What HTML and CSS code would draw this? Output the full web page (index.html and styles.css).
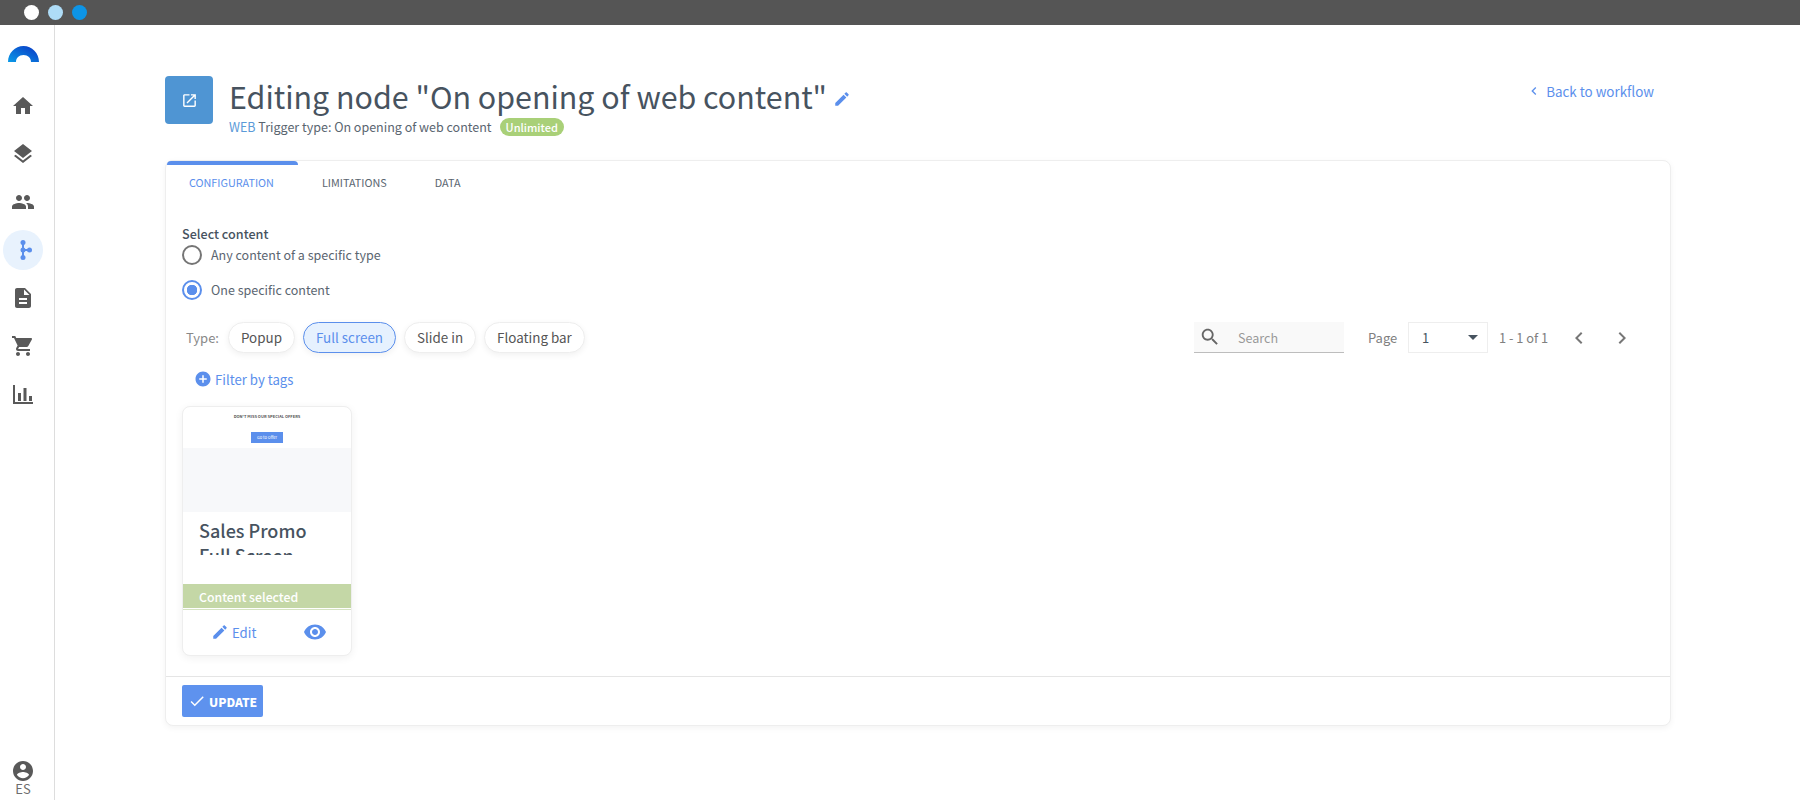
FILE: index.html
```html
<!DOCTYPE html>
<html lang="en">
<head>
<meta charset="utf-8">
<title>Editing node</title>
<link rel="stylesheet" href="styles.css">
</head>
<body>
<div class="topbar">
  <span class="dot dot-white"></span><span class="dot dot-light"></span><span class="dot dot-blue"></span>
</div>
<div class="app">
  <nav class="sidebar">
    <svg class="logo" viewBox="0 0 31 16" width="31" height="16"><defs><linearGradient id="lg" x1="0" y1="1" x2="1" y2="0"><stop offset="0" stop-color="#0a9be8"/><stop offset="1" stop-color="#0a35c4"/></linearGradient></defs><path fill="url(#lg)" d="M0 16C0 7 7 0 15.500 0S31 7 31 16H23C23 12 20 9 15.500 9S8 12 8 16Z"/></svg>
    <a class="nav-item"><svg viewBox="0 0 24 24"><path d="M10 20v-6h4v6h5v-8h3L12 3 2 12h3v8z"/></svg></a>
    <a class="nav-item"><svg viewBox="0 0 24 24"><path d="M11.990 18.540l-7.370-5.730L3 14.070l9 7 9-7-1.630-1.270-7.380 5.740zM12 16l7.360-5.730L21 9l-9-7-9 7 1.630 1.270L12 16z"/></svg></a>
    <a class="nav-item"><svg viewBox="0 0 24 24"><path d="M16 11c1.660 0 2.990-1.340 2.990-3S17.660 5 16 5c-1.660 0-3 1.340-3 3s1.340 3 3 3zm-8 0c1.660 0 2.990-1.340 2.990-3S9.660 5 8 5C6.340 5 5 6.340 5 8s1.340 3 3 3zm0 2c-2.330 0-7 1.170-7 3.500V19h14v-2.500c0-2.330-4.670-3.500-7-3.500zm8 0c-.29 0-.62.02-.97.05 1.160.84 1.970 1.970 1.970 3.450V19h6v-2.500c0-2.330-4.670-3.500-7-3.500z"/></svg></a>
    <a class="nav-item nav-active"><svg viewBox="0 0 24 24"><path d="M11 3h2v18h-2zM12 11h7v2h-7z"/><circle cx="12" cy="4.500" r="2.500"/><circle cx="12" cy="19.500" r="2.500"/><circle cx="12" cy="12" r="2.500"/><circle cx="18.500" cy="12" r="2.500"/></svg></a>
    <a class="nav-item"><svg viewBox="0 0 24 24"><path d="M14 2H6c-1.100 0-1.990.9-1.990 2L4 20c0 1.100.89 2 1.990 2H18c1.100 0 2-.9 2-2V8l-6-6zm2 16H8v-2h8v2zm0-4H8v-2h8v2zm-3-5V3.500L18.500 9H13z"/></svg></a>
    <a class="nav-item"><svg viewBox="0 0 24 24"><path d="M7 18c-1.100 0-1.990.9-1.990 2S5.900 22 7 22s2-.9 2-2-.9-2-2-2zM1 2v2h2l3.600 7.590-1.350 2.450c-.16.28-.25.61-.25.96 0 1.100.9 2 2 2h12v-2H7.420c-.14 0-.25-.11-.25-.25l.03-.12.9-1.630h7.450c.75 0 1.410-.41 1.750-1.030l3.580-6.490c.08-.14.12-.31.12-.48 0-.55-.45-1-1-1H5.210l-.94-2H1zm16 16c-1.100 0-1.990.9-1.990 2s.89 2 1.990 2 2-.9 2-2-.9-2-2-2z"/></svg></a>
    <a class="nav-item"><svg viewBox="0 0 24 24"><path d="M2 3h2v17h18v2H2zM7 11h3v8H7zM12.500 6h3v13h-3zM18 14h3v5h-3z"/></svg></a>
    <div class="user">
      <svg viewBox="0 0 24 24"><path d="M12 2C6.480 2 2 6.480 2 12s4.480 10 10 10 10-4.480 10-10S17.520 2 12 2zm0 3c1.660 0 3 1.340 3 3s-1.340 3-3 3-3-1.340-3-3 1.340-3 3-3zm0 14.200c-2.500 0-4.710-1.280-6-3.220.03-1.990 4-3.080 6-3.080 1.990 0 5.970 1.090 6 3.080-1.290 1.940-3.500 3.220-6 3.220z"/></svg>
      <span class="lang">ES</span>
    </div>
  </nav>
  <main class="main">
    <header class="header">
      <div class="tile"><svg viewBox="0 0 24 24"><path d="M19 19H5V5h7V3H5c-1.110 0-2 .9-2 2v14c0 1.100.89 2 2 2h14c1.100 0 2-.9 2-2v-7h-2v7zM14 3v2h3.590l-9.830 9.830 1.410 1.410L19 6.410V10h2V3h-7z"/></svg></div>
      <div class="heading">
        <h1 class="title">Editing node "On opening of web content"<svg class="title-edit" viewBox="0 0 24 24"><path d="M3 17.250V21h3.750L17.810 9.940l-3.750-3.750L3 17.250zM20.710 7.040c.39-.39.39-1.020 0-1.410l-2.340-2.340c-.39-.39-1.020-.39-1.410 0l-1.830 1.830 3.750 3.750 1.830-1.830z"/></svg></h1>
        <div class="subtitle"><span class="web">WEB</span> Trigger type: On opening of web content<span class="badge">Unlimited</span></div>
      </div>
      <a class="back"><svg viewBox="0 0 24 24"><path d="M15.410 7.410L14 6l-6 6 6 6 1.410-1.410L10.830 12z"/></svg>Back to workflow</a>
    </header>
    <section class="card">
      <div class="tabs">
        <span class="tab tab-active">CONFIGURATION</span>
        <span class="tab">LIMITATIONS</span>
        <span class="tab">DATA</span>
      </div>
      <div class="card-body">
        <div class="field-label">Select content</div>
        <label class="radio-row"><span class="radio"></span>Any content of a specific type</label>
        <label class="radio-row radio-row-second"><span class="radio radio-on"></span>One specific content</label>
        <div class="filters">
          <span class="type-label">Type:</span>
          <span class="chip">Popup</span>
          <span class="chip chip-on">Full screen</span>
          <span class="chip">Slide in</span>
          <span class="chip">Floating bar</span>
          <div class="search">
            <svg viewBox="0 0 24 24"><path d="M15.500 14h-.79l-.28-.27C15.410 12.590 16 11.110 16 9.500 16 5.910 13.090 3 9.500 3S3 5.910 3 9.500 5.910 16 9.500 16c1.610 0 3.090-.59 4.230-1.570l.27.28v.79l5 4.990L20.490 19l-4.990-5zm-6 0C7.010 14 5 11.990 5 9.500S7.010 5 9.500 5 14 7.010 14 9.500 11.990 14 9.500 14z"/></svg>
            <span>Search</span>
          </div>
          <span class="page-label">Page</span>
          <div class="page-select"><span>1</span><i class="caret"></i></div>
          <span class="page-count">1 - 1 of 1</span>
          <svg class="pager" viewBox="0 0 24 24"><path d="M15.410 7.410L14 6l-6 6 6 6 1.410-1.410L10.830 12z"/></svg>
          <svg class="pager pager-next" viewBox="0 0 24 24"><path d="M10 6L8.590 7.410 13.170 12l-4.580 4.590L10 18l6-6z"/></svg>
        </div>
        <a class="tags"><svg viewBox="0 0 24 24"><path d="M12 2C6.480 2 2 6.480 2 12s4.480 10 10 10 10-4.480 10-10S17.520 2 12 2zm5 11h-4v4h-2v-4H7v-2h4V7h2v4h4v2z"/></svg>Filter by tags</a>
        <article class="content-card">
          <div class="thumb">
            <div class="thumb-head">DON'T MISS OUR SPECIAL OFFERS</div>
            <div class="thumb-btn">Go to Offer</div>
          </div>
          <div class="thumb-gray"></div>
          <div class="cc-title"><div class="cc-title-clip">Sales Promo<br>Full Screen</div></div>
          <div class="selected">Content selected</div>
          <div class="cc-actions">
            <a class="cc-edit"><svg viewBox="0 0 24 24"><path d="M3 17.250V21h3.750L17.810 9.940l-3.750-3.750L3 17.250zM20.710 7.040c.39-.39.39-1.020 0-1.410l-2.340-2.340c-.39-.39-1.020-.39-1.410 0l-1.830 1.830 3.750 3.750 1.830-1.830z"/></svg>Edit</a>
            <svg class="cc-eye" viewBox="0 0 24 24"><path d="M12 4.500C7 4.500 2.730 7.610 1 12c1.730 4.390 6 7.500 11 7.500s9.270-3.110 11-7.500c-1.730-4.390-6-7.500-11-7.500zM12 17c-2.760 0-5-2.240-5-5s2.240-5 5-5 5 2.240 5 5-2.240 5-5 5zm0-8c-1.660 0-3 1.340-3 3s1.340 3 3 3 3-1.340 3-3-1.340-3-3-3z"/></svg>
          </div>
        </article>
      </div>
      <footer class="card-footer">
        <button class="update"><svg viewBox="0 0 24 24"><path d="M9 16.170L4.830 12l-1.410 1.410L9 19 21 7l-1.410-1.410z"/></svg>UPDATE</button>
      </footer>
    </section>
  </main>
</div>
</body>
</html>
```

FILE: styles.css
```css
* { box-sizing: border-box; }
html, body { margin: 0; padding: 0; height: 800px; overflow: hidden; background: #fff; }
body { font-family: "Noto Sans CJK SC", "Noto Sans", sans-serif; color: #47535f; }
svg { display: block; fill: currentColor; }

.topbar { height: 25px; background: #555; display: flex; align-items: center; gap: 9px; padding-left: 24px; }
.dot { width: 15px; height: 15px; border-radius: 50%; }
.dot-white { background: #fff; }
.dot-light { background: #aedcf7; }
.dot-blue { background: #0d94e6; }

.app { display: flex; height: 775px; }
.sidebar { width: 55px; flex: none; border-right: 1px solid #ddd; display: flex; flex-direction: column; align-items: center; padding-right: 8px; }
.logo { margin-top: 21px; margin-bottom: 24px; flex: none; }
.nav-item { width: 40px; height: 40px; margin-bottom: 8px; border-radius: 50%; display: flex; align-items: center; justify-content: center; color: #595959; flex: none; }
.nav-item svg { width: 24px; height: 24px; }
.nav-active { background: #e8f2fd; color: #5b8fec; }
.user { margin-top: auto; display: flex; flex-direction: column; align-items: center; color: #595959; }
.user svg { width: 24px; height: 24px; }
.lang { font-size: 13px; line-height: 11px; color: #6d6d6d; margin-bottom: 6px; }

.main { flex: 1; padding: 51px 0 0 110px; width: 0; }
.header { display: flex; height: 84px; width: 1506px; }
.tile { width: 48px; height: 48px; border-radius: 4px; background: #4f95d3; color: #fff; display: flex; align-items: center; justify-content: center; flex: none; }
.tile svg { width: 17px; height: 17px; }
.heading { margin-left: 16px; padding-top: 1px; }
.title { margin: 0; font-size: 30.400px; font-weight: 400; line-height: 38px; color: #47535f; display: flex; align-items: center; white-space: nowrap; }
.title-edit { width: 18px; height: 18px; color: #5b8fec; margin-left: 6px; margin-top: 6px; }
.subtitle { font-size: 12.500px; line-height: 20px; color: #5a6570; display: flex; align-items: center; white-space: pre; margin-top: 2px; }
.web { color: #5b9ad8; }
.badge { background: #a9d078; color: #fff; font-size: 11px; line-height: 18px; padding: 0 6px; border-radius: 9px; margin-left: 8px; font-weight: 500; }
.back { margin-left: auto; display: flex; align-items: center; height: 30px; margin-right: 17px; font-size: 13.400px; color: #5b8fec; }
.back svg { width: 16px; height: 16px; margin-right: 4px; }

.card { width: 1506px; height: 566px; border: 1px solid #eee; border-radius: 8px; box-shadow: 0 2px 6px rgba(0,0,0,.05); display: flex; flex-direction: column; background: #fff; }
.tabs { display: flex; height: 44px; flex: none; }
.tab { font-size: 10.800px; line-height: 43px; padding: 0 24px; color: #5a6570; }
.tab-active { color: #5b8fec; padding: 0 24px 0 22px; margin-left: 1px; position: relative; width: 131px; white-space: nowrap; }
.tab-active::before { content: ""; position: absolute; left: 0; right: 0; top: 0; height: 4px; background: #5b8fec; border-radius: 4px 4px 0 0; }
.card-body { flex: 1; padding: 20px 16px 0; }
.field-label { font-size: 12.600px; line-height: 18px; font-weight: 500; color: #47535f; }
.radio-row { display: flex; align-items: center; height: 24px; padding-bottom: 2px; font-size: 12.500px; color: #5a6570; }
.radio-row-second { margin-top: 11px; }
.radio { width: 20px; height: 20px; border-radius: 50%; border: 2px solid #757575; margin: 2px 9px 0 0; flex: none; }
.radio-on { border-color: #5b8fec; background: radial-gradient(circle, #5b8fec 0 5px, #fff 5.500px); }
.filters { display: flex; align-items: center; height: 31px; margin-top: 20px; padding-left: 4px; }
.type-label { font-size: 13px; color: #888; width: 42px; flex: none; }
.chip { height: 31px; line-height: 29px; padding: 0 12px; border: 1px solid #eee; border-radius: 16px; font-size: 13.400px; color: #555; margin-right: 8px; box-shadow: 0 2px 6px rgba(0,0,0,.06); background: #fff; }
.chip-on { background: #e6f1fe; border-color: #5b8fec; color: #5b8fec; }
.search { margin-left: auto; width: 150px; height: 31px; background: #f9f9f9; border-bottom: 1px solid #bdbdbd; display: flex; align-items: center; color: #666; font-size: 12.600px; }
.search svg { width: 22px; height: 22px; margin: 0 17px 0 5px; }
.search span { color: #999; }
.page-label { font-size: 13px; color: #808080; margin-left: 24px; width: 40px; }
.page-select { width: 80px; height: 31px; border: 1px solid #eee; display: flex; align-items: center; justify-content: space-between; padding: 0 9px 0 13px; font-size: 13px; color: #47535f; }
.caret { border: 5px solid transparent; border-top-color: #47535f; border-bottom: 0; }
.page-count { font-size: 12.800px; color: #808080; margin-left: 11px; width: 68px; white-space: nowrap; }
.pager { width: 24px; height: 24px; color: #777; }
.pager-next { margin-left: 19px; margin-right: 20px; }
.tags { display: flex; align-items: center; height: 24px; margin-top: 14px; margin-left: 12px; font-size: 13.200px; color: #5b8fec; }
.tags svg { width: 18px; height: 18px; margin-right: 3px; }
.content-card { width: 170px; height: 250px; margin-top: 15px; border: 1px solid #eee; border-radius: 8px; box-shadow: 0 2px 8px rgba(0,0,0,.06); overflow: hidden; background: #fff; display: flex; flex-direction: column; }
.thumb { height: 41px; flex: none; display: flex; flex-direction: column; align-items: center; }
.thumb-head { font-size: 4px; line-height: 6px; margin-top: 6px; color: #555; font-weight: 700; white-space: nowrap; }
.thumb-btn { width: 32px; height: 11px; margin-top: 13px; background: #5b8fec; color: #fff; font-size: 4px; line-height: 11px; text-align: center; white-space: nowrap; }
.thumb-gray { height: 64px; background: #f7f8fa; flex: none; }
.cc-title { height: 72px; padding: 6px 16px 0; flex: none; }
.cc-title-clip { height: 37px; overflow: hidden; font-size: 18px; line-height: 25px; font-weight: 500; color: #47535f; white-space: nowrap; }
.selected { height: 25px; background: #c4d7a6; color: #fff; font-size: 12.300px; line-height: 26px; padding-left: 16px; border-bottom: 1px solid #fff; box-shadow: 0 1px 0 #d6e3c2; flex: none; font-weight: 500; }
.cc-actions { flex: 1; display: flex; align-items: center; justify-content: space-between; padding: 0 24px 0 28px; color: #5b8fec; }
.cc-edit { display: flex; align-items: center; font-size: 13.200px; }
.cc-edit svg { width: 18px; height: 18px; margin-right: 3px; }
.cc-eye { width: 24px; height: 24px; }
.card-footer { height: 49px; border-top: 1px solid #e5e5e5; padding: 8px 16px; flex: none; }
.update { height: 32px; width: 81px; display: flex; align-items: center; background: #5e92ee; color: #fff; border: 0; border-radius: 2px; padding: 0 0 0 6px; font-family: inherit; font-size: 12px; font-weight: 900; white-space: nowrap; }
.update svg { width: 18px; height: 18px; margin-right: 3px; }
```
